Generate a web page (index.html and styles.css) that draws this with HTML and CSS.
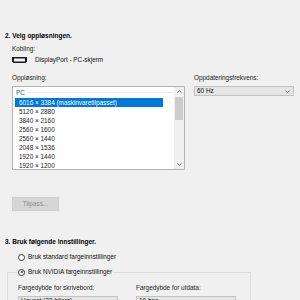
FILE: index.html
```html
<!DOCTYPE html>
<html>
<head>
    <title>Endre oppløsning</title>
    <link rel="stylesheet" href="styles.css">
</head>
<body>
<div class="panel">
    <h2 class="step">2. Velg oppløsningen.</h2>
    <div class="indent">
        <div class="label conn-label">Kobling:</div>
        <div class="conn">
            <svg class="dp" width="15" height="6" viewBox="0 0 15 6">
                <path d="M0 0H15V4.5L13.5 6H1.5L0 4.5Z" fill="#1a1a1a"/>
                <rect x="2" y="1.5" width="11" height="3" fill="#f4f4f4"/>
            </svg>
            <span>DisplayPort - PC-skjerm</span>
        </div>

        <div class="res-row">
            <div class="res-col">
                <div class="label">Oppløsning:</div>
                <div class="listbox">
                    <div class="items">
                        <div class="group"><span>PC</span><i class="rule"></i></div>
                        <div class="item sel">6016 × 3384 (maskinvaretilpasset)</div>
                        <div class="item">5120 × 2880</div>
                        <div class="item">3840 × 2160</div>
                        <div class="item">2560 × 1600</div>
                        <div class="item">2560 × 1440</div>
                        <div class="item">2048 × 1536</div>
                        <div class="item">1920 × 1440</div>
                        <div class="item">1920 × 1200</div>
                    </div>
                    <div class="scrollbar">
                        <svg class="arrow" width="5" height="3" viewBox="0 0 5 3"><polyline points="0.5,2.5 2.5,0.5 4.5,2.5" fill="none" stroke="#606060" stroke-width="0.9"/></svg>
                        <div class="thumb"></div>
                        <div class="track"></div>
                        <svg class="arrow" width="5" height="3" viewBox="0 0 5 3"><polyline points="0.5,0.5 2.5,2.5 4.5,0.5" fill="none" stroke="#606060" stroke-width="0.9"/></svg>
                    </div>
                </div>
            </div>
            <div class="rate-col">
                <div class="label">Oppdateringsfrekvens:</div>
                <div class="combo">
                    <span>60 Hz</span>
                    <svg width="5" height="3" viewBox="0 0 5 3"><polyline points="0.5,0.5 2.5,2.5 4.5,0.5" fill="none" stroke="#707070" stroke-width="0.8"/></svg>
                </div>
            </div>
        </div>

        <button class="btn" disabled>Tilpass...</button>
    </div>

    <h2 class="step step3">3. Bruk følgende innstillinger.</h2>
    <div class="radio first"><i class="dot"></i><span>Bruk standard fargeinnstillinger</span></div>
    <fieldset class="groupbox">
        <legend class="radio"><i class="dot on"></i><span>Bruk NVIDIA fargeinnstillinger</span></legend>
        <div class="color-row">
            <div class="color-col">
                <div class="label">Fargedybde for skrivebord:</div>
                <div class="combo"><span>Høyest (32-biters)</span><svg width="5" height="3" viewBox="0 0 5 3"><polyline points="0.5,0.5 2.5,2.5 4.5,0.5" fill="none" stroke="#707070" stroke-width="0.8"/></svg></div>
            </div>
            <div class="color-col">
                <div class="label">Fargedybde for utdata:</div>
                <div class="combo"><span>10 bpc</span><svg width="5" height="3" viewBox="0 0 5 3"><polyline points="0.5,0.5 2.5,2.5 4.5,0.5" fill="none" stroke="#707070" stroke-width="0.8"/></svg></div>
            </div>
        </div>
    </fieldset>
</div>
</body>
</html>
```
FILE: styles.css
```css
html, body, h2 {
    margin: 0;
    padding: 0;
}
body {
    background: #f0f0f0;
    font-family: "Liberation Sans", Arial, sans-serif;
    font-size: 6.4px;
    line-height: 8px;
    color: #111;
    overflow: hidden;
}
.panel {
    padding-top: 32px;
}
.step {
    margin-left: 5px;
    font-size: 6.5px;
    line-height: 8px;
    font-weight: bold;
    color: #000;
}
.indent {
    padding-left: 12px;
}
.label {
    height: 8px;
    color: #222;
}
.conn-label {
    margin-top: 5px;
}
.conn {
    display: flex;
    align-items: center;
    gap: 8px;
    height: 8px;
    margin-top: 3px;
}
.dp {
    display: block;
}
.res-row {
    display: flex;
    gap: 9px;
    margin-top: 10px;
}
.res-col {
    width: 173px;
}
.rate-col {
    width: 100px;
}
.listbox {
    display: flex;
    height: 84px;
    margin-top: 4px;
    border: 1px solid #b4b4b4;
    background: #fff;
    box-sizing: border-box;
    overflow: hidden;
}
.items {
    flex: 1;
    color: #1a1a1a;
}
.group {
    display: flex;
    align-items: center;
    gap: 3px;
    height: 11px;
    padding-left: 3px;
    color: #2b58b4;
}
.group .rule {
    flex: 1;
    height: 1px;
    background: #e8e8e8;
}
.item {
    height: 9px;
    line-height: 9px;
    padding-left: 4px;
    margin-left: 2px;
    width: 144px;
}
.item.sel {
    background: #0078d7;
    color: #fff;
}
.scrollbar {
    display: flex;
    flex-direction: column;
    align-items: center;
    width: 10px;
    background: #f0f0f0;
}
.arrow {
    display: block;
    margin: 3px 0;
}
.thumb {
    width: 8px;
    height: 23px;
    margin-top: 1px;
    background: #cdcdcd;
}
.track {
    flex: 1;
}
.combo {
    display: flex;
    align-items: center;
    justify-content: space-between;
    height: 10px;
    margin-top: 4px;
    padding: 0 3px 0 2px;
    border: 1px solid #c2c2c2;
    background: #e5e5e5;
    box-sizing: border-box;
    color: #111;
}
.combo svg {
    display: block;
}
.btn {
    display: block;
    width: 47px;
    height: 14px;
    margin-top: 27px;
    padding: 0;
    border: 1px solid #d0d0d0;
    background: #d6d6d6;
    color: #8a8a8a;
    font: inherit;
}
.step3 {
    margin-top: 27px;
}
.radio {
    display: flex;
    align-items: center;
    gap: 3px;
    height: 8px;
    color: #111;
}
.radio.first {
    margin: 7px 0 0 18px;
}
.dot {
    position: relative;
    width: 7px;
    height: 7px;
    border: 1px solid #333;
    border-radius: 50%;
    background: #fff;
    box-sizing: border-box;
}
.dot.on::after {
    content: "";
    position: absolute;
    left: 1.5px;
    top: 1.5px;
    width: 2px;
    height: 2px;
    border-radius: 50%;
    background: #222;
}
.groupbox {
    width: 244px;
    margin: 7px 0 0 7px;
    padding: 8px 10px 0;
    border: 1px solid #dcdcdc;
    box-sizing: border-box;
}
.groupbox legend {
    padding: 0 1px 0 0;
}
.color-row {
    display: flex;
    gap: 18px;
}
.color-col {
    width: 100px;
}
```
